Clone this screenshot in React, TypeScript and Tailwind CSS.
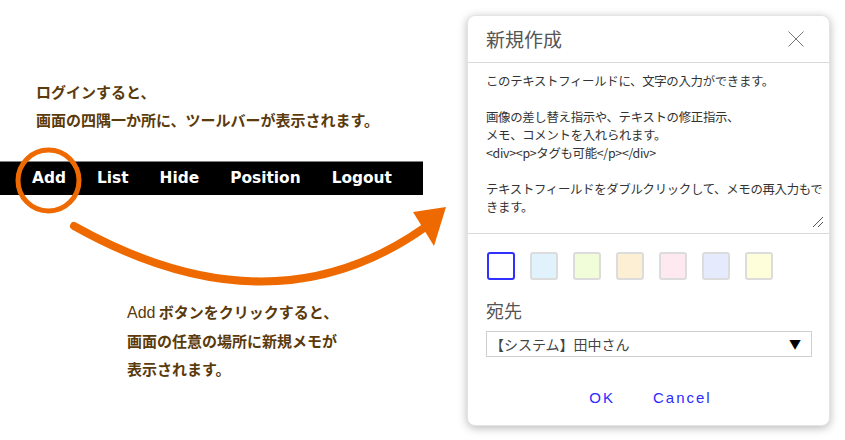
const swatches = ['#ffffff', '#e0f3fc', '#f1fcd9', '#fdefd4', '#fde9ef', '#e5eafc', '#fefedb'];

const jp = "font-['Noto_Sans_CJK_JP',sans-serif]";

function Overlay() {
  return (
    <svg className="absolute inset-0 pointer-events-none" width="467" height="440" viewBox="0 0 467 440">
      <circle cx="48.5" cy="180.5" r="30.5" fill="none" stroke="#ee6a00" strokeWidth="5" />
      <path d="M 74 226 Q 270 336 424 228" fill="none" stroke="#ee6a00" strokeWidth="8" strokeLinecap="round" />
      <polygon points="413,212 446,207 434,246" fill="#ee6a00" />
    </svg>
  );
}

export default function App() {
  return (
    <div className="w-[845px] h-[440px] bg-white flex overflow-hidden">
      {/* left: explanation */}
      <div className="relative w-[467px] shrink-0">
        <div className={`${jp} pt-[78px] pl-[36px] text-[15px] leading-[28px] font-bold text-[#5b3a0b]`}>
          <p>ログインすると、</p>
          <p>画面の四隅一か所に、ツールバーが表示されます。</p>
        </div>

        <div className="mt-[27px] w-[423px] h-[34px] bg-black border-t border-[#808080] flex items-center gap-[31px] pl-[32px] font-['DejaVu_Sans',sans-serif] font-bold text-[15.4px] text-white">
          <span>Add</span>
          <span>List</span>
          <span>Hide</span>
          <span>Position</span>
          <span>Logout</span>
        </div>

        <div className={`${jp} pt-[103px] pl-[127px] text-[15px] leading-[28px] font-bold text-[#5b3a0b]`}>
          <p><span className="font-['Liberation_Sans',sans-serif] font-normal text-[16px]">Add</span> ボタンをクリックすると、</p>
          <p>画面の任意の場所に新規メモが</p>
          <p>表示されます。</p>
        </div>

        <Overlay />
      </div>

      {/* right: dialog */}
      <div className={`${jp} mt-[15px] w-[363px] h-[411px] bg-white rounded-[8px] border border-[#e4e4e4] shadow-[0_2px_10px_rgba(0,0,0,0.28)] flex flex-col`}>
        <div className="h-[47px] shrink-0 border-b border-[#d9d9d9] flex items-center justify-between pl-[18px] pr-[25px]">
          <span className="text-[19px] text-[#555]">新規作成</span>
          <svg width="16" height="16" viewBox="0 0 16 16">
            <line x1="0.5" y1="0.5" x2="15.5" y2="15.5" stroke="#777" strokeWidth="1" />
            <line x1="15.5" y1="0.5" x2="0.5" y2="15.5" stroke="#777" strokeWidth="1" />
          </svg>
        </div>

        <div className="relative h-[171px] shrink-0 border-b border-[#d9d9d9] pt-[9px] pl-[18px] pr-[2px] whitespace-nowrap text-[12.4px] leading-[18px] text-[#333] tracking-[-0.3px]">
          <p>このテキストフィールドに、文字の入力ができます。</p>
          <p>&nbsp;</p>
          <p>画像の差し替え指示や、テキストの修正指示、</p>
          <p>メモ、コメントを入れられます。</p>
          <p>&lt;div&gt;&lt;p&gt;タグも可能&lt;/p&gt;&lt;/div&gt;</p>
          <p>&nbsp;</p>
          <p>テキストフィールドをダブルクリックして、メモの再入力もで</p>
          <p>きます。</p>
          <svg className="absolute right-[5px] bottom-[5px]" width="12" height="12" viewBox="0 0 12 12">
            <line x1="1" y1="11" x2="11" y2="1" stroke="#555" strokeWidth="1" />
            <line x1="6" y1="11" x2="11" y2="6" stroke="#555" strokeWidth="1" />
          </svg>
        </div>

        <div className="flex gap-[15px] pl-[19px] pt-[18px]">
          {swatches.map((c, i) => (
            <div
              key={c}
              className={i === 0
                ? 'w-[28px] h-[28px] rounded-[3px] border-2 border-[#3030ff]'
                : 'w-[28px] h-[28px] rounded-[3px] border-2 border-[#dcdcdc]'}
              style={{ backgroundColor: c }}
            />
          ))}
        </div>

        <div className="pl-[18px] mt-[18px] text-[18px] leading-[24px] text-[#555]">宛先</div>

        <div className="ml-[18px] mr-[17px] mt-[9px] h-[26px] border border-[#cfcfcf] flex items-center justify-between pl-[3px] pr-[10px]">
          <span className="text-[14px] text-[#444]">【システム】田中さん</span>
          <span className="text-[12px] text-black">▼</span>
        </div>

        <div className="flex justify-center gap-[38px] mt-[30px] pl-[4px] font-['Liberation_Sans',sans-serif] text-[15px] tracking-[2px] text-[#2a2aff]">
          <span>OK</span>
          <span>Cancel</span>
        </div>
      </div>
    </div>
  );
}
